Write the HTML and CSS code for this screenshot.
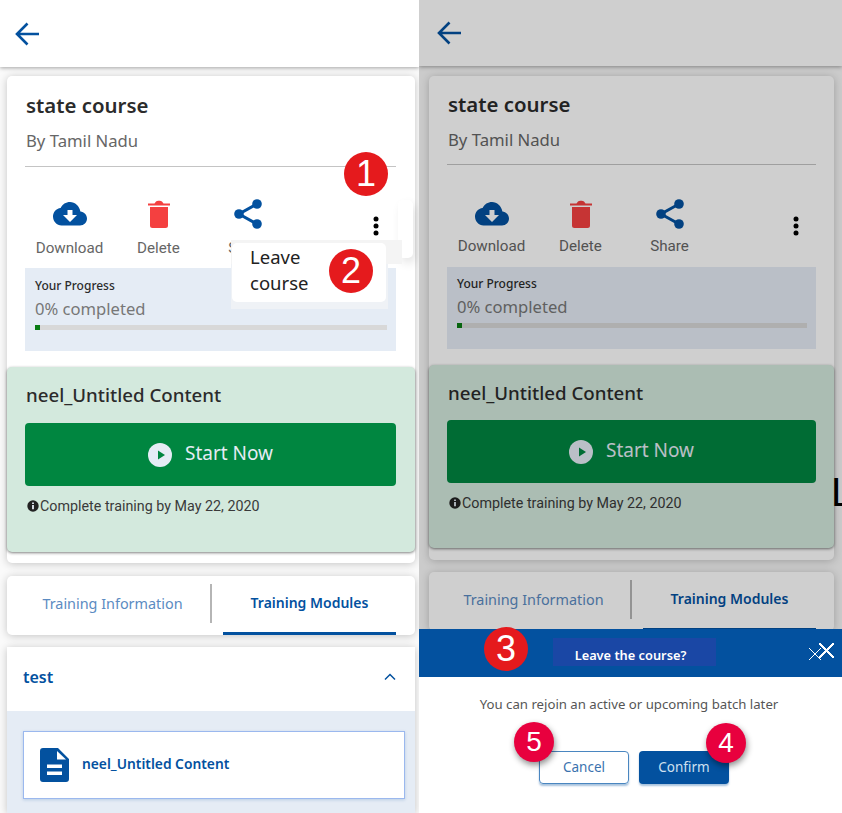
FILE: index.html
```html
<!DOCTYPE html>
<html lang="en">
<head>
    <meta charset="UTF-8">
    <meta name="viewport" content="width=device-width, initial-scale=1.0">
    <title>Leave course</title>
    <link rel="stylesheet" href="styles.css">
</head>
<body>

    <svg class="icon-sheet" aria-hidden="true">
        <symbol id="i-back" viewBox="0 0 24 24"><path d="M24 12H2M12.500 1.500 2 12l10.500 10.500" fill="none" stroke="currentColor" stroke-width="2.600"/></symbol>
        <symbol id="i-cloud" viewBox="0 0 34 24"><path fill-rule="evenodd" d="M27.400 9.400C26.400 4 22 0 17 0 13 0 9.300 2.300 7.600 6 3.200 6.600 0 10.200 0 14.600 0 19.600 3.800 23.500 8.500 23.500h18.500c3.900 0 7-3.200 7-7 0-3.700-2.900-6.800-6.600-7.100zM24 13l-7 7-7-7h4.500V8h5v5H24z"/></symbol>
        <symbol id="i-trash" viewBox="0 0 24 28"><path d="M3 7h18v18.500a2.500 2.500 0 0 1-2.500 2.500h-13A2.500 2.500 0 0 1 3 25.500zM1 3.500h6.500L9 1.500c1-1 5-1 6 0l1.500 2H23V5.500H1z"/></symbol>
        <symbol id="i-share" viewBox="0 0 28 30"><path d="M23 5 5 15l18 10" fill="none" stroke="currentColor" stroke-width="3"/><circle cx="23" cy="5" r="4.800"/><circle cx="5" cy="15" r="4.800"/><circle cx="23" cy="25" r="4.800"/></symbol>
        <symbol id="i-dots" viewBox="0 0 6 20"><circle cx="3" cy="3" r="2.500"/><circle cx="3" cy="10" r="2.500"/><circle cx="3" cy="17" r="2.500"/></symbol>
        <symbol id="i-play" viewBox="0 0 24 24"><circle cx="12" cy="12" r="12" fill="#e5ecf5"/><path d="M10 7.500 17 12l-7 4.500z" fill="#008640"/></symbol>
        <symbol id="i-info" viewBox="0 0 12 12"><circle cx="6" cy="6" r="5.700"/><path d="M5.100 5h1.800v4.200H5.100zM5.100 2.600h1.800v1.500H5.100z" fill="#e5ecf5"/></symbol>
        <symbol id="i-chevron" viewBox="0 0 12 8"><path d="M1 6.500 6 1.500l5 5" fill="none" stroke="currentColor" stroke-width="1.500"/></symbol>
        <symbol id="i-doc" viewBox="0 0 29 34"><path fill-rule="evenodd" d="M3 0h15l11 11v20a3 3 0 0 1-3 3H3a3 3 0 0 1-3-3V3a3 3 0 0 1 3-3zM7 16.500V20h15v-3.500zM7 23.500V27h15v-3.500z"/><path d="M17 3v8.500h9z" fill="white"/></symbol>
    </svg>

    <div class="page">

        <!-- first screen, menu open -->
        <section class="screen">
            <header class="top-bar"><svg class="back-icon"><use href="#i-back"/></svg></header>

            <div class="course-card">
                <div class="course-head">
                    <h1>state course</h1>
                    <p class="byline">By Tamil Nadu</p>
                </div>
                <div class="actions">
                    <div class="action"><svg class="icon-cloud"><use href="#i-cloud"/></svg><span>Download</span></div>
                    <div class="action"><svg class="icon-trash"><use href="#i-trash"/></svg><span>Delete</span></div>
                    <div class="action"><svg class="icon-share"><use href="#i-share"/></svg><span>Share</span></div>
                    <svg class="icon-dots"><use href="#i-dots"/></svg>
                </div>
                <div class="progress-box">
                    <div class="progress-title">Your Progress</div>
                    <div class="progress-text">0% completed</div>
                    <div class="progress-track"><div class="progress-fill" style="width: 1.400%"></div></div>
                </div>
                <div class="content-box">
                    <h2>neel_Untitled Content</h2>
                    <div class="start-btn"><svg class="icon-play"><use href="#i-play"/></svg>Start Now</div>
                    <p class="due"><svg class="icon-info"><use href="#i-info"/></svg>Complete training by May 22, 2020</p>
                </div>
            </div>

            <nav class="tabs">
                <div class="tab">Training Information</div>
                <div class="tab tab-active">Training Modules</div>
            </nav>

            <div class="module">
                <div class="module-head">test<svg class="icon-chevron"><use href="#i-chevron"/></svg></div>
                <div class="module-body">
                    <div class="module-item"><svg class="icon-doc"><use href="#i-doc"/></svg>neel_Untitled Content</div>
                </div>
            </div>

            <div class="menu-back"></div>
            <div class="menu-shade"></div>
            <div class="menu">Leave<br>course</div>
            <span class="marker marker-1">1</span>
            <span class="marker marker-2">2</span>
        </section>

        <!-- second screen, confirm dialog -->
        <section class="screen screen-dim">
            <header class="top-bar"><svg class="back-icon"><use href="#i-back"/></svg></header>

            <div class="course-card">
                <div class="course-head">
                    <h1>state course</h1>
                    <p class="byline">By Tamil Nadu</p>
                </div>
                <div class="actions">
                    <div class="action"><svg class="icon-cloud"><use href="#i-cloud"/></svg><span>Download</span></div>
                    <div class="action"><svg class="icon-trash"><use href="#i-trash"/></svg><span>Delete</span></div>
                    <div class="action"><svg class="icon-share"><use href="#i-share"/></svg><span>Share</span></div>
                    <svg class="icon-dots"><use href="#i-dots"/></svg>
                </div>
                <div class="progress-box">
                    <div class="progress-title">Your Progress</div>
                    <div class="progress-text">0% completed</div>
                    <div class="progress-track"><div class="progress-fill" style="width: 1.400%"></div></div>
                </div>
                <div class="content-box">
                    <h2>neel_Untitled Content</h2>
                    <div class="start-btn"><svg class="icon-play"><use href="#i-play"/></svg>Start Now</div>
                    <p class="due"><svg class="icon-info"><use href="#i-info"/></svg>Complete training by May 22, 2020</p>
                </div>
            </div>

            <nav class="tabs">
                <div class="tab">Training Information</div>
                <div class="tab tab-active">Training Modules</div>
            </nav>

            <div class="stray-letter">L</div>
            <div class="scrim"></div>

            <div class="dialog">
                <div class="dialog-head">
                    <div class="dialog-title">Leave the course?</div>
                    <span class="close-small"></span>
                    <span class="close-big"></span>
                </div>
                <p class="dialog-text">You can rejoin an active or upcoming batch later</p>
                <div class="dialog-btns">
                    <div class="btn btn-cancel">Cancel</div>
                    <div class="btn btn-confirm">Confirm</div>
                </div>
            </div>

            <span class="marker marker-3">3</span>
            <span class="marker marker-round marker-4">4</span>
            <span class="marker marker-round marker-5">5</span>
        </section>

    </div>

</body>
</html>
```

FILE: styles.css
```css
body {
    margin: 0;
    padding: 0;
    background-color: white;
    color: #2b2b2b;
    font-family: "Noto Sans", sans-serif;
}

.icon-sheet {
    display: none;
}

.page {
    display: grid;
    grid-template-columns: 419px 423px;
    height: 813px;
    overflow: hidden;
}

.screen {
    position: relative;
    height: 813px;
    overflow: hidden;
    background-color: #fafafa;
}

.top-bar {
    display: flex;
    align-items: center;
    height: 67px;
    padding-left: 15px;
    background-color: white;
    box-shadow: 0 1px 4px rgba(0, 0, 0, 0.35);
    color: #03519f;
}

.back-icon {
    width: 24px;
    height: 24px;
    fill: currentColor;
}

/* course card */
.course-card {
    margin: 9px 4px 0 7px;
    padding: 15px 0 11px;
    background-color: white;
    border-radius: 5px;
    box-shadow: 0 1px 8px rgba(0, 0, 0, 0.22);
}

.course-head {
    margin: 0 19px 0 18px;
    padding: 0 0 14px 1px;
    border-bottom: 1px solid #c4c4c4;
}

h1 {
    margin: 0;
    font-size: 20.400px;
    font-weight: 600;
    line-height: 28px;
}

.byline {
    margin: 11px 0 0;
    font-size: 16.700px;
    line-height: 22px;
    color: #666;
}

.actions {
    display: flex;
    margin: 31px 19px 10px 18px;
}

.action {
    display: flex;
    flex-direction: column;
    align-items: center;
    width: 89px;
    font-family: Roboto, sans-serif;
    font-size: 15.200px;
    line-height: 20px;
    color: #666;
}

.action svg {
    height: 32px;
    margin-bottom: 8px;
    fill: #03519f;
}

.action .icon-cloud {
    width: 34px;
}

.action .icon-trash {
    width: 24px;
    fill: #f44040;
}

.action .icon-share {
    width: 28px;
    color: #03519f;
}

.icon-dots {
    width: 6px;
    height: 20px;
    margin: 18px 17px 0 auto;
    fill: black;
}

.progress-box {
    height: 83px;
    margin: 0 19px 16px 18px;
    padding: 10px 9px 0 10px;
    box-sizing: border-box;
    background-color: #e5ecf5;
}

.progress-title {
    font-size: 12px;
    font-weight: 500;
    line-height: 16px;
}

.progress-text {
    margin-top: 4px;
    font-size: 16.600px;
    line-height: 22px;
    color: #777;
}

.progress-track {
    height: 5px;
    margin-top: 5px;
    background-color: #d8d8d8;
}

.progress-fill {
    height: 100%;
    background-color: #0a7d14;
}

/* green block */
.content-box {
    height: 185px;
    padding: 15px 19px 0 18px;
    box-sizing: border-box;
    background-color: #d3e9dd;
    border-radius: 5px;
    box-shadow: 0 1px 3px rgba(0, 0, 0, 0.5);
}

h2 {
    margin: 0 0 0 1px;
    font-size: 18.700px;
    font-weight: 500;
    line-height: 26px;
}

.start-btn {
    display: flex;
    align-items: center;
    justify-content: center;
    gap: 13px;
    height: 63px;
    margin-top: 15px;
    padding-bottom: 4px;
    box-sizing: border-box;
    background-color: #008640;
    border-radius: 4px;
    font-size: 19px;
    color: #e5ecf5;
}

.icon-play {
    width: 24px;
    height: 24px;
    margin-top: 4px;
}

.due {
    display: flex;
    align-items: center;
    margin: 10px 0 0 2px;
    font-family: Roboto, sans-serif;
    font-size: 14.300px;
    line-height: 20px;
    color: #3a3a3a;
}

.icon-info {
    width: 12px;
    height: 12px;
    margin-right: 1px;
    fill: #222;
}

/* tabs */
.tabs {
    display: grid;
    grid-template-columns: 205px 1fr;
    height: 59px;
    margin: 13px 4px 0 7px;
    padding-right: 19px;
    background-color: white;
    border-radius: 5px;
    box-shadow: 0 1px 8px rgba(0, 0, 0, 0.22);
}

.tab {
    display: flex;
    align-items: center;
    justify-content: center;
    margin: 8px 0 12px;
    padding-left: 8px;
    border-right: 2px solid #b5b5b5;
    font-size: 14.400px;
    color: #5b8bc2;
}

.tab-active {
    margin: 0 0 0 11px;
    padding: 0 0 4px;
    border-right: 0;
    border-bottom: 3px solid #03519f;
    font-size: 14px;
    font-weight: 600;
    color: #03519f;
}

/* module list */
.module {
    margin: 12px 4px 0 7px;
    background-color: white;
    box-shadow: 0 1px 8px rgba(0, 0, 0, 0.22);
}

.module-head {
    display: flex;
    align-items: center;
    justify-content: space-between;
    height: 64px;
    padding: 0 19px 4px 16px;
    box-sizing: border-box;
    font-size: 16px;
    font-weight: 600;
    color: #03519f;
}

.icon-chevron {
    width: 12px;
    height: 8px;
    color: #03519f;
}

.module-body {
    height: 102px;
    padding: 20px 10px 0 16px;
    box-sizing: border-box;
    background-color: #e5ecf5;
}

.module-item {
    display: flex;
    align-items: center;
    gap: 13px;
    height: 68px;
    padding: 0 0 4px 16px;
    box-sizing: border-box;
    background-color: white;
    border: 1px solid #9bb8ee;
    box-shadow: 0 1px 3px rgba(3, 81, 159, 0.2);
    font-size: 13.800px;
    font-weight: 600;
    color: #03519f;
}

.icon-doc {
    width: 29px;
    height: 34px;
    margin-top: 4px;
    fill: #03519f;
}

/* open menu */
.menu-back {
    position: absolute;
    left: 398px;
    top: 200px;
    width: 15px;
    height: 58px;
    background-color: white;
    border-radius: 5px;
    box-shadow: 3px 5px 10px rgba(0, 0, 0, 0.1);
}

.menu-shade {
    position: absolute;
    left: 231px;
    top: 240px;
    width: 171px;
    height: 24px;
    background-color: #f4f4f4;
}

.menu-shade::after {
    content: "";
    position: absolute;
    left: 0;
    top: 24px;
    width: 157px;
    height: 45px;
    background-color: #eff2f6;
}

.menu {
    position: absolute;
    left: 232px;
    top: 243px;
    width: 154px;
    height: 59px;
    padding: 1px 0 0 18px;
    box-sizing: border-box;
    background-color: white;
    border-radius: 5px;
    font-size: 18.500px;
    line-height: 26px;
    color: #222;
}

/* red numbers */
.marker {
    position: absolute;
    display: flex;
    align-items: center;
    justify-content: center;
    width: 44px;
    height: 44px;
    border-radius: 50%;
    background-color: #e51a1d;
    color: white;
    font-family: "Liberation Sans", sans-serif;
    font-size: 36px;
}

.marker-1 { left: 344px; top: 152px; }
.marker-2 { left: 329px; top: 249px; }
.marker-3 { left: 65px; top: 627px; }

.marker-round {
    width: 40px;
    height: 40px;
    background-color: #e8003e;
    font-size: 28px;
    box-shadow: 1px 3px 6px rgba(0, 0, 0, 0.45);
}

.marker-4 { left: 287px; top: 723px; }
.marker-5 { left: 95px; top: 722px; }

/* second screen differences */
.screen-dim .top-bar {
    height: 66px;
    padding-left: 18px;
}

.screen-dim .course-card {
    margin: 10px 8px 0 10px;
    padding: 14px 0 12px;
}

.screen-dim .course-head {
    margin-right: 18px;
    padding-bottom: 13px;
}

.screen-dim .actions {
    margin: 33px 18px 11px 18px;
}

.screen-dim .action svg {
    margin-bottom: 6px;
}

.screen-dim .progress-box {
    height: 82px;
    margin-right: 18px;
    padding-top: 9px;
}

.screen-dim .content-box {
    height: 183px;
    padding-right: 18px;
}

.screen-dim .start-btn {
    margin-top: 14px;
}

.screen-dim .tabs {
    grid-template-columns: 203px 1fr;
    margin: 12px 8px 0 10px;
    padding-right: 18px;
}

.stray-letter {
    position: absolute;
    left: 412px;
    top: 469px;
    font-family: "Liberation Sans", sans-serif;
    font-size: 40px;
    line-height: 46px;
    color: black;
}

.scrim {
    position: absolute;
    inset: 0;
    background-color: rgba(0, 0, 0, 0.19);
}

.dialog {
    position: absolute;
    left: 0;
    right: 0;
    bottom: 0;
    height: 184px;
    background-color: white;
}

.dialog-head {
    position: relative;
    height: 48px;
    background-color: #03519f;
}

.dialog-title {
    position: absolute;
    left: 134px;
    top: 9px;
    width: 163px;
    height: 28px;
    padding: 7px 8px 0 0;
    box-sizing: border-box;
    background-color: #1a47a5;
    font-size: 12.800px;
    font-weight: 600;
    line-height: 20px;
    text-align: center;
    color: white;
}

.close-small,
.close-big {
    position: absolute;
    background:
        linear-gradient(45deg, transparent 46%, white 46%, white 54%, transparent 54%),
        linear-gradient(-45deg, transparent 46%, white 46%, white 54%, transparent 54%);
}

.close-small {
    left: 390px;
    top: 19px;
    width: 12px;
    height: 12px;
}

.close-big {
    left: 400px;
    top: 14px;
    width: 15px;
    height: 15px;
}

.dialog-text {
    margin: 17px 0 0;
    padding-right: 3px;
    font-size: 13.200px;
    line-height: 20px;
    text-align: center;
    color: #555;
}

.dialog-btns {
    display: flex;
    justify-content: center;
    gap: 10px;
    margin: 37px 0 0 7px;
}

.btn {
    display: flex;
    align-items: center;
    justify-content: center;
    width: 90px;
    height: 33px;
    padding-bottom: 2px;
    box-sizing: border-box;
    border-radius: 4px;
    font-size: 13.500px;
    box-shadow: 0 2px 2px rgba(3, 81, 159, 0.35);
}

.btn-cancel {
    border: 1px solid #4a86c0;
    color: #3a72ae;
}

.btn-confirm {
    background-color: #03519f;
    color: #cfe0f0;
}
```
